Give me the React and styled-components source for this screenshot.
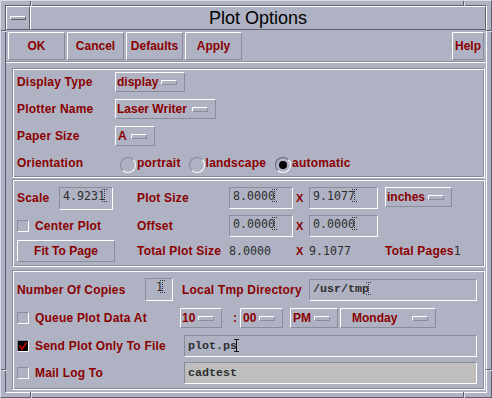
import React from 'react';
import styled, { createGlobalStyle } from 'styled-components';

const BG = '#aeb2c3';
const HI = '#ffffff';
const SH = '#898c9b';
const DARK = '#5e6070';
const RED = '#8b0000';
const INK = '#2e2e2e';

const GlobalStyle = createGlobalStyle`
  html, body { margin: 0; padding: 0; background: ${BG}; }
  body { font-family: "Liberation Sans", Arial, sans-serif; }
`;

const Window = styled.div`
  position: relative;
  width: 492px;
  height: 398px;
  box-sizing: border-box;
  background: ${BG};
  border: 1px solid;
  border-color: #d9dbe4 ${DARK} ${DARK} #d9dbe4;
  padding: 4px;
`;

const WindowInner = styled.div`
  height: 100%;
  box-sizing: border-box;
  border: 1px solid;
  border-color: ${DARK} ${HI} ${HI} ${DARK};
  display: flex;
  flex-direction: column;
`;

// resize-corner marks drawn over the window frame
const Tick = styled.span`
  position: absolute;
  background: ${DARK};
  box-shadow: 1px 1px 0 #d9dbe4;
  ${(p) =>
    p.$side === 'top' || p.$side === 'bottom'
      ? `width: 1px; height: 5px; left: ${p.$at}px; ${p.$side}: 0;`
      : `width: 5px; height: 1px; top: ${p.$at}px; ${p.$side}: 0;`}
`;

const TitleBar = styled.div`
  display: flex;
  height: 24px;
  flex: none;
`;

const MenuButton = styled.div`
  width: 24px;
  box-sizing: border-box;
  border: 1px solid;
  border-color: ${HI} ${DARK} ${DARK} ${HI};
  display: flex;
  align-items: center;
  justify-content: center;
`;

const MenuDash = styled.span`
  width: 16px;
  height: 4px;
  box-sizing: border-box;
  border: 1px solid;
  border-color: ${HI} ${DARK} ${DARK} ${HI};
`;

const Title = styled.div`
  flex: 1;
  box-sizing: border-box;
  border: 1px solid;
  border-color: ${HI} ${DARK} ${DARK} ${HI};
  text-align: center;
  font-size: 18px;
  line-height: 22px;
  color: #000;
`;

const Content = styled.div`
  flex: 1;
  display: flex;
  flex-direction: column;
`;

const ButtonRow = styled.div`
  display: flex;
  gap: 2px;
  padding: 2px 2px 0 2px;
`;

const PushButton = styled.div`
  width: ${(p) => p.$w || 57}px;
  height: ${(p) => p.$h || 28}px;
  box-sizing: border-box;
  border: 1px solid;
  border-color: ${HI} ${SH} ${SH} ${HI};
  display: flex;
  align-items: center;
  justify-content: center;
  font-weight: bold;
  font-size: 12px;
  color: ${RED};
  flex: none;
  ${(p) => p.$end && 'margin-left: auto;'}
`;

const Separator = styled.div`
  margin-top: 1px;
  border-top: 1px solid ${SH};
  border-bottom: 1px solid ${HI};
`;

const Group = styled.div`
  margin: ${(p) => p.$mt}px 1px 0 6px;
  border: 1px solid;
  border-color: ${SH} ${HI} ${HI} ${SH};
  box-shadow: inset 1px 1px 0 ${HI}, inset -1px -1px 0 ${SH};
  padding: ${(p) => p.$pt}px 5px ${(p) => p.$pb}px 4px;
  display: flex;
  flex-direction: column;
`;

const Row = styled.div`
  display: flex;
  align-items: center;
  height: ${(p) => p.$h}px;
  margin-top: ${(p) => p.$mt || 0}px;
`;

const Cell = styled.div`
  width: ${(p) => p.$w}px;
  flex: none;
  display: flex;
  align-items: center;
  padding-left: ${(p) => p.$pl || 0}px;
  box-sizing: border-box;
`;

const Label = styled.span`
  font-weight: bold;
  font-size: 12px;
  letter-spacing: 0.2px;
  color: ${RED};
  white-space: nowrap;
  ${(p) => p.$w && `width: ${p.$w}px; flex: none;`}
`;

const Times = styled.span`
  font-weight: bold;
  font-size: 11px;
  color: ${RED};
  margin-left: 2px;
`;

const OptionMenu = styled.div`
  width: ${(p) => p.$w}px;
  height: 20px;
  box-sizing: border-box;
  border: 1px solid;
  border-color: ${HI} ${SH} ${SH} ${HI};
  padding: 0 7px 0 ${(p) => p.$pl || 1}px;
  display: flex;
  align-items: center;
  flex: none;
  font-weight: bold;
  font-size: 12px;
  color: ${RED};
  white-space: nowrap;
  align-self: ${(p) => p.$self || 'auto'};
`;

const Indicator = styled.span`
  width: 16px;
  height: 5px;
  box-sizing: border-box;
  border: 1px solid;
  border-color: ${HI} ${SH} ${SH} ${HI};
  margin-left: auto;
  flex: none;
`;

const Field = styled.div`
  width: ${(p) => p.$w}px;
  height: ${(p) => p.$h || 22}px;
  box-sizing: border-box;
  border: 1px solid;
  border-color: ${SH} ${HI} ${HI} ${SH};
  background: ${(p) => p.$bg || 'transparent'};
  padding: ${(p) => p.$pt || 0}px 0 0 3px;
  display: flex;
  align-items: ${(p) => (p.$pt ? 'flex-start' : 'center')};
  flex: none;
  white-space: pre;
  color: ${INK};
  font-family: ${(p) => (p.$text ? '"Liberation Mono", "Courier New", monospace' : '"DejaVu Sans Mono", monospace')};
  font-weight: ${(p) => (p.$text ? 'bold' : 'normal')};
  font-size: ${(p) => (p.$text ? '11.7px' : '11.6px')};
  line-height: 14px;
`;

const Value = styled.span`
  font-family: "DejaVu Sans Mono", monospace;
  font-size: 11.6px;
  color: ${INK};
`;

const Caret = styled.span`
  display: inline-block;
  width: 5px;
  height: 13px;
  margin-left: -3px;
  flex: none;
  background: ${(p) =>
    p.$solid
      ? `linear-gradient(#111, #111) center / 1px 100% no-repeat,
         linear-gradient(#111, #111) top / 5px 1px no-repeat,
         linear-gradient(#111, #111) bottom / 5px 1px no-repeat`
      : `repeating-linear-gradient(to bottom, #333 0 1px, transparent 1px 2px) center / 1px 100% no-repeat,
         repeating-linear-gradient(to right, #333 0 1px, transparent 1px 2px) top / 5px 1px no-repeat,
         repeating-linear-gradient(to right, #333 0 1px, transparent 1px 2px) bottom / 5px 1px no-repeat`};
`;

const CheckBox = styled.span`
  width: 12px;
  height: 12px;
  box-sizing: border-box;
  border: 1px solid;
  border-color: ${SH} ${HI} ${HI} ${SH};
  background: ${(p) => (p.$checked ? '#000' : 'transparent')};
  margin-right: 6px;
  flex: none;
  display: flex;
  align-items: center;
  justify-content: center;
`;

const RadioGroup = styled.div`
  display: flex;
  align-items: center;
  margin-left: 5px;
`;

const RadioItem = styled.div`
  display: flex;
  align-items: center;
  margin-right: ${(p) => p.$gap || 0}px;
`;

const RadioDot = styled.span`
  width: 16px;
  height: 16px;
  box-sizing: border-box;
  border-radius: 50%;
  border: 1px solid;
  border-color: ${(p) => (p.$on ? `${DARK} ${HI} ${HI} ${DARK}` : `${SH} ${HI} ${HI} ${SH}`)};
  margin: 3px 1px 0 0;
  display: flex;
  align-items: center;
  justify-content: center;
  &::after {
    content: '';
    width: 8px;
    height: 8px;
    border-radius: 50%;
    background: ${(p) => (p.$on ? '#000' : 'transparent')};
  }
`;

function Check() {
  return (
    <svg width="10" height="10" viewBox="0 0 10 10">
      <polyline points="1.5,4.5 4,8 8.5,1.5" fill="none" stroke="#b00000" strokeWidth="2" />
    </svg>
  );
}

function Option({ w, pl, self, children }) {
  return (
    <OptionMenu $w={w} $pl={pl} $self={self}>
      {children}
      <Indicator />
    </OptionMenu>
  );
}

export default function App() {
  return (
    <>
      <GlobalStyle />
      <Window>
        <WindowInner>
          <TitleBar>
            <MenuButton>
              <MenuDash />
            </MenuButton>
            <Title>Plot Options</Title>
          </TitleBar>

          <Content>
            <ButtonRow>
              <PushButton>OK</PushButton>
              <PushButton>Cancel</PushButton>
              <PushButton>Defaults</PushButton>
              <PushButton>Apply</PushButton>
              <PushButton $w={32} $end>Help</PushButton>
            </ButtonRow>
            <Separator />

            <Group $mt={5} $pt={3} $pb={4}>
              <Row $h={20}>
                <Label $w={98}>Display Type</Label>
                <Option w={70}>display</Option>
              </Row>
              <Row $h={20} $mt={7}>
                <Label $w={98}>Plotter Name</Label>
                <Option w={101}>Laser Writer</Option>
              </Row>
              <Row $h={20} $mt={7}>
                <Label $w={98}>Paper Size</Label>
                <Option w={40} pl={2}>A</Option>
              </Row>
              <Row $h={20} $mt={7}>
                <Label $w={98}>Orientation</Label>
                <RadioGroup>
                  <RadioItem $gap={8}>
                    <RadioDot />
                    <Label>portrait</Label>
                  </RadioItem>
                  <RadioItem $gap={9}>
                    <RadioDot />
                    <Label>landscape</Label>
                  </RadioItem>
                  <RadioItem>
                    <RadioDot $on />
                    <Label>automatic</Label>
                  </RadioItem>
                </RadioGroup>
              </Row>
            </Group>

            <Group $mt={1} $pt={7} $pb={4}>
              <Row $h={22}>
                <Cell $w={120}>
                  <Label $w={42}>Scale</Label>
                  <Field $w={54} $h={23} $pt={1}>4.9231<Caret /></Field>
                </Cell>
                <Cell $w={92}><Label>Plot Size</Label></Cell>
                <Cell $w={65}><Field $w={64} $pt={1}>8.0000<Caret /></Field></Cell>
                <Cell $w={15}><Times>X</Times></Cell>
                <Cell $w={76}><Field $w={69} $pt={1}>9.1077<Caret /></Field></Cell>
                <Option w={67} self="flex-start">inches</Option>
              </Row>
              <Row $h={22} $mt={6}>
                <Cell $w={120}>
                  <CheckBox />
                  <Label>Center Plot</Label>
                </Cell>
                <Cell $w={92}><Label>Offset</Label></Cell>
                <Cell $w={65}><Field $w={64} $pt={1}>0.0000<Caret /></Field></Cell>
                <Cell $w={15}><Times>X</Times></Cell>
                <Cell $w={76}><Field $w={69} $pt={1}>0.0000<Caret /></Field></Cell>
              </Row>
              <Row $h={22} $mt={3}>
                <Cell $w={120}>
                  <PushButton $w={98} $h={22}>Fit To Page</PushButton>
                </Cell>
                <Cell $w={92}><Label>Total Plot Size</Label></Cell>
                <Cell $w={65}><Value>8.0000</Value></Cell>
                <Cell $w={15}><Times>X</Times></Cell>
                <Cell $w={76}><Value>9.1077</Value></Cell>
                <Label>Total Pages</Label>
                <Value>1</Value>
              </Row>
            </Group>

            <Group $mt={3} $pt={7} $pb={5}>
              <Row $h={23}>
                <Label $w={128}>Number Of Copies</Label>
                <Field $w={28} $h={23} $pt={1}> 1<Caret /></Field>
                <Cell $w={136} $pl={9}><Label>Local Tmp Directory</Label></Cell>
                <Field $w={168} $text $pt={2}>/usr/tmp<Caret /></Field>
              </Row>
              <Row $h={20} $mt={7}>
                <Cell $w={163}>
                  <CheckBox />
                  <Label>Queue Plot Data At</Label>
                </Cell>
                <Option w={42}>10</Option>
                <Cell $w={18} $pl={11}><Label>:</Label></Cell>
                <Option w={43} pl={2}>00</Option>
                <Cell $w={7} />
                <Option w={48} pl={2}>PM</Option>
                <Cell $w={2} />
                <Option w={96} pl={11}>Monday</Option>
              </Row>
              <Row $h={22} $mt={7}>
                <Cell $w={167}>
                  <CheckBox $checked><Check /></CheckBox>
                  <Label>Send Plot Only To File</Label>
                </Cell>
                <Field $w={293} $text $pt={3}>plot.ps<Caret $solid /></Field>
              </Row>
              <Row $h={22} $mt={5}>
                <Cell $w={167}>
                  <CheckBox />
                  <Label>Mail Log To</Label>
                </Cell>
                <Field $w={293} $text $pt={3} $bg="#bebebe">cadtest</Field>
              </Row>
            </Group>
          </Content>
        </WindowInner>
        <Tick $side="top" $at={29} />
        <Tick $side="top" $at={462} />
        <Tick $side="bottom" $at={29} />
        <Tick $side="bottom" $at={462} />
        <Tick $side="left" $at={29} />
        <Tick $side="right" $at={29} />
        <Tick $side="left" $at={368} />
        <Tick $side="right" $at={368} />
      </Window>
    </>
  );
}
